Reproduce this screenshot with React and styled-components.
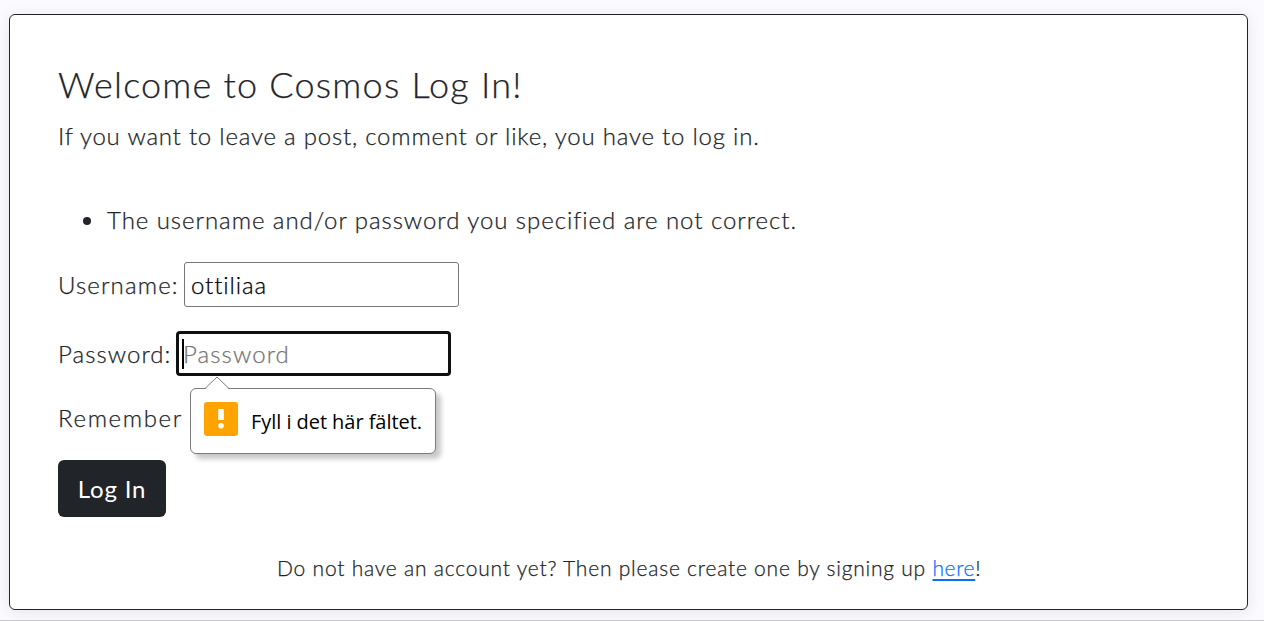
import React from "react";
import styled, { createGlobalStyle } from "styled-components";

const Global = createGlobalStyle`
  *, *::before, *::after { box-sizing: border-box; }
  html, body { margin: 0; padding: 0; overflow: hidden; }
  body {
    background: #fbfaff;
    color: #212529;
    font-family: Lato, "Open Sans", sans-serif;
    font-weight: 300;
    font-size: 24px;
    line-height: 36px;
  }
`;

const Page = styled.main`
  height: 621px;
  padding: 14px 16px 0 9px;
  border-bottom: 1px solid #c8c8ca;
`;

const Card = styled.section`
  height: 596px;
  padding: 47px 48px 0;
  display: flex;
  flex-direction: column;
  background: #fff;
  border: 1px solid #212529;
  border-radius: 6px;
  box-shadow: 0 2px 14px rgba(33, 37, 41, 0.1);
`;

const Text = styled.span`
  white-space: nowrap;
  letter-spacing: ${(p) => p.$spacing || 0}px;
  -webkit-text-stroke: ${(p) => (p.$plain ? 0 : 0.25)}px currentColor;
`;

const Title = styled.h1`
  margin: 0 0 12px;
  font-size: 36px;
  line-height: 44px;
  font-weight: 300;
`;

const Lead = styled.p`
  margin: 0 0 48px;
`;

const Errors = styled.ul`
  margin: 0 0 24px;
  padding: 0;
  list-style: none;
`;

const ErrorItem = styled.li`
  display: flex;
  align-items: center;
  gap: 16px;
  padding-left: 25px;

  &::before {
    content: "";
    width: 8px;
    height: 8px;
    margin-top: 2px;
    border-radius: 50%;
    background: #212529;
  }
`;

const Form = styled.form`
  display: flex;
  flex-direction: column;
  align-items: flex-start;
`;

const Field = styled.div`
  position: relative;
  display: flex;
  align-items: center;
  margin-bottom: 24px;
`;

const Label = styled.label`
  width: ${(p) => p.$width}px;
`;

const InputBox = styled.div`
  display: flex;
  align-items: center;
  width: 275px;
  height: 45px;
  padding: 0 0 0 ${(p) => (p.$focused ? 4 : 6)}px;
  background: #fff;
  color: ${(p) => (p.$focused ? "#757575" : "#000")};
  border: ${(p) => (p.$focused ? "3px solid #101010" : "1px solid #767676")};
  border-radius: ${(p) => (p.$focused ? 4 : 3)}px;
`;

const Caret = styled.span`
  width: 2px;
  height: 30px;
  margin: 0 -1px 0 -1px;
  background: #000;
`;

const Remember = styled.div`
  margin: 0 0 24px;
`;

const Bubble = styled.div`
  position: absolute;
  top: 57px;
  left: 132px;
  z-index: 1;
  display: flex;
  align-items: center;
  width: 246px;
  height: 66px;
  padding: 0 0 0 13px;
  gap: 13px;
  background: #fff;
  border: 1px solid #7b7b7b;
  border-radius: 6px;
  box-shadow: 5px 5px 5px rgba(0, 0, 0, 0.22);
  color: #000;
  font-family: "Open Sans", "Noto Sans", sans-serif;
  font-weight: 400;
  font-size: 20px;
  line-height: 28px;
`;

const BubbleText = styled.span`
  padding-top: 2px;
  white-space: nowrap;
  letter-spacing: -0.05px;
`;

const Pointer = styled.svg`
  position: absolute;
  top: -13px;
  left: 13px;
`;

const Warning = styled.svg`
  flex: none;
  margin-top: -4px;
`;

const Submit = styled.button`
  width: 108px;
  height: 57px;
  margin: 0 0 35px;
  padding: 1px 0 0;
  border: 0;
  border-radius: 6px;
  background: #212529;
  color: #fff;
  font: inherit;
  font-weight: 400;
`;

const Footer = styled.p`
  margin: 0 0 0 219px;
  font-size: 21px;
  line-height: 32px;
`;

const Link = styled.a`
  color: #0d6efd;
  letter-spacing: 0.6px;
  text-decoration: underline;
  text-decoration-thickness: 2px;
  text-underline-offset: 3px;
`;

export default function App() {
  return (
    <>
      <Global />
      <Page>
        <Card>
          <Title><Text $spacing={1.22}>Welcome to Cosmos Log In!</Text></Title>
          <Lead><Text $spacing={0.78}>If you want to leave a post, comment or like, you have to log in.</Text></Lead>
          <Errors>
            <ErrorItem><Text $spacing={0.95}>The username and/or password you specified are not correct.</Text></ErrorItem>
          </Errors>
          <Form>
            <Field>
              <Label $width={126}><Text $spacing={1.15}>Username:</Text></Label>
              <InputBox><Text $spacing={0.9}>ottiliaa</Text></InputBox>
            </Field>
            <Field>
              <Label $width={118}><Text $spacing={1.05}>Password:</Text></Label>
              <InputBox $focused><Caret /><Text $spacing={1.1}>Password</Text></InputBox>
              <Bubble role="alert">
                <Pointer width="26" height="14" viewBox="0 0 26 14">
                  <path d="M1 13.5 13 1.5 25 13.5V14H1Z" fill="#fff" />
                  <path d="M1 12.5 13 1 25 12.5" fill="none" stroke="#7b7b7b" />
                </Pointer>
                <Warning width="34" height="34" viewBox="0 0 34 34">
                  <rect width="34" height="34" rx="3" fill="#ffa300" />
                  <path d="M14.2 7h5.6v11h-5.6z" fill="#fff" />
                  <circle cx="17" cy="23.7" r="2.8" fill="#fff" />
                </Warning>
                <BubbleText>Fyll i det här fältet.</BubbleText>
              </Bubble>
            </Field>
            <Remember><Text $spacing={1.65}>Remember</Text></Remember>
            <Submit type="button"><Text $plain $spacing={0.8}>Log In</Text></Submit>
          </Form>
          <Footer><Text $spacing={0.78}>Do not have an account yet? Then please create one by signing up <Link>here</Link>!</Text></Footer>
        </Card>
      </Page>
    </>
  );
}
